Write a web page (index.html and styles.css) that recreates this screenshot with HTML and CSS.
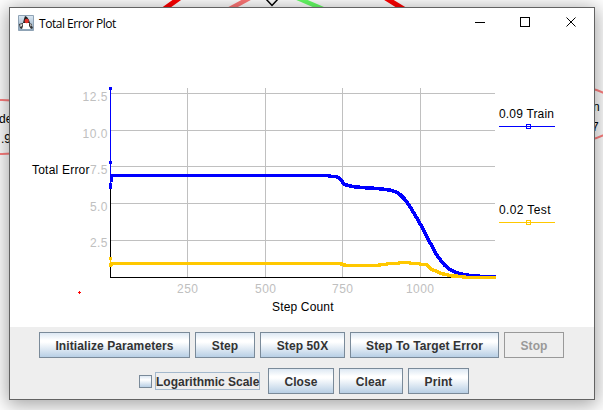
FILE: index.html
```html
<!DOCTYPE html>
<html lang="en">
<head>
<meta charset="utf-8">
<title>Total Error Plot</title>
<link rel="stylesheet" href="styles.css">
</head>
<body>
<svg class="network" width="603" height="410" viewBox="0 0 603 410">
  <g fill="none">
    <path d="M181-3L160 12M376-8L410 13" stroke="#f00" stroke-width="5"/>
    <path d="M259-7L224 12" stroke="#f77" stroke-width="4.5"/>
    <path d="M288-6L330 12" stroke="#6f6" stroke-width="4.5"/>
    <path d="M266-1L272 5.500L278-1" stroke="#000" stroke-width="1.500"/>
    <ellipse cx="2" cy="127" rx="50" ry="27" stroke="#ff8080" stroke-width="2"/>
    <ellipse cx="576" cy="114" rx="44" ry="27" stroke="#ff8080" stroke-width="2"/>
  </g>
  <g class="label">
    <text x="-1" y="123">de</text>
    <text x="1" y="143">.98</text>
    <text x="593" y="111">n</text>
    <text x="592" y="131">7</text>
  </g>
</svg>
<div class="window">
  <header class="titlebar">
    <svg class="app-icon" width="16" height="16" viewBox="0 0 16 16">
      <defs><linearGradient id="tile" x2="0" y2="1"><stop stop-color="#dce9f5"/><stop offset="1" stop-color="#8ca5bb"/></linearGradient></defs>
      <path d="M.5.5h15v15H.5z" fill="url(#tile)" stroke="#8fa3b5"/>
      <path d="M5 8h6l2 6H4z" fill="#fff"/>
      <path d="M7 1l2 1 2 3 1 3H5l1-4z" fill="#222"/>
      <path d="M1 9l4-1 0 3-1 3-2-1zM11 8l3 1 0 2 1 2-2 1-2-3z" fill="#333"/>
      <path d="M2 9.500l2.500-.5-.5 2-1.500 1zM12 9l1.500.5v1.500l-1 .5z" fill="#ddd"/>
      <circle cx="8.700" cy="6" r="2.200" fill="#e2332c"/>
    </svg>
    <h1 class="title">Total Error Plot</h1>
    <svg class="controls" width="104" height="12" viewBox="0 0 104 12" fill="none" stroke="#000">
      <path d="M0 6.500h10M45.500 1.500h9v9h-9z" shape-rendering="crispEdges"/>
      <path d="M91.500 1.500l9 9M100.500 1.500l-9 9"/>
    </svg>
  </header>
  <svg class="plot" width="584" height="289" viewBox="10 38 584 289">
    <path class="grid" d="M187.500 88V277M265.500 88V277M342.500 88V277M420.500 88V277M110 93.500H495M110 130.500H495M110 166.500H495M110 203.500H495M110 240.500H495"/>
    <path class="axis" d="M110.500 88V277.500H495"/>
    <path class="thin train" d="M110.500 88V186"/>
    <path class="mark train" d="M109 87h3v3h-3zM109 161h3v3h-3zM109 183h3v6h-3zM110 177h3v5h-3z"/>
    <path class="curve train" d="M111 175.500H329L330 176.500H336L338 177.500L340 178.500L342 181L344 184.500L349 185.500L352 186.500L362 187.500L377 188.500L386 189.500L392 190.500L396 192L400 194.500L405 199.500L410 206.500L415 215L420 223.500L425 233L430 242.500L435 252L440 259.500L445 265.500L450 269.500L455 272L461 274L470 275.500L482 276.500H496"/>
    <path class="thin test" d="M110.500 259V266"/>
    <path class="mark test" d="M109 257h3v3h-3zM109 263h3v4h-3zM111 263h2v3h-2z"/>
    <path class="curve test" d="M111 263.500H340L343 264.500L346 265.500H378L381 264.500H386L388 263.500H398L400 262.500H409L411 263.500H419L421 264.500H426L432 269.500L437 271.500L441 273.500L446 274.500L452 276L461 276.500L467 277.500H496"/>
    <path class="thin train" d="M499 126.500H555"/>
    <path class="thin train box" d="M526.500 124.500h4v4h-4z"/>
    <path class="thin train" d="M526.500 126.500h4"/>
    <path class="thin test" d="M499 222.500H555"/>
    <path class="thin test box" d="M526.500 220.500h4v4h-4z"/>
    <path class="thin test" d="M526.500 222.500h4"/>
    <path d="M79 291h1v1h1v1h-1v1h-1v-1h-1v-1h1z" fill="#f00" shape-rendering="crispEdges"/>
    <g class="tick">
      <text x="82.500" y="101" textLength="25">12.5</text>
      <text x="82.500" y="138" textLength="25">10.0</text>
      <text x="90" y="174" textLength="17.500">7.5</text>
      <text x="90" y="211" textLength="17.500">5.0</text>
      <text x="90" y="247" textLength="17.500">2.5</text>
      <text x="177" y="293" textLength="21">250</text>
      <text x="255" y="293" textLength="21">500</text>
      <text x="332" y="293" textLength="21">750</text>
      <text x="406" y="293" textLength="28">1000</text>
    </g>
    <g class="label">
      <text x="32" y="174" textLength="57.500">Total Error</text>
      <text x="272" y="311" textLength="61.500">Step Count</text>
      <text x="499" y="118" textLength="55">0.09 Train</text>
      <text x="499" y="214" textLength="51.500">0.02 Test</text>
    </g>
  </svg>
  <div class="panel">
    <div class="row">
      <button class="btn init">Initialize Parameters</button>
      <button class="btn step">Step</button>
      <button class="btn step50">Step 50X</button>
      <button class="btn target">Step To Target Error</button>
      <button class="btn stop" disabled>Stop</button>
    </div>
    <div class="row second">
      <label class="check"><span class="tick-box"></span><span class="focus">Logarithmic Scale</span></label>
      <button class="btn close">Close</button>
      <button class="btn clear">Clear</button>
      <button class="btn print">Print</button>
    </div>
  </div>
</div>
</body>
</html>
```
FILE: styles.css
```css
* { box-sizing: border-box; }
body {
  margin: 0;
  width: 603px;
  height: 410px;
  overflow: hidden;
  padding: 7px 8px 10px 9px;
  background: #fff;
  font-family: "Liberation Sans", Arial, sans-serif;
}
.network { position: absolute; left: 0; top: 0; }
.window {
  position: relative;
  width: 586px;
  height: 393px;
  border: 1px solid #626262;
  background: #fff;
  box-shadow: 0 3px 18px 2px rgba(0, 0, 0, .36);
  display: flex;
  flex-direction: column;
}
.titlebar {
  height: 30px;
  display: flex;
  align-items: center;
  padding: 0 15px 0 8px;
}
.title {
  margin: 0 auto 0 5px;
  font: 400 12px "Open Sans", "Noto Sans", sans-serif;
  letter-spacing: -.47px;
  color: #000;
}
.app-icon { margin-top: -1px; }
.controls { margin-top: -2px; }
.plot { display: block; flex: none; }
.grid, .axis, .thin, .curve { fill: none; shape-rendering: crispEdges; }
.grid { stroke: silver; }
.axis { stroke: #000; }
.train { stroke: #00f; }
.test { stroke: #ffc800; }
.curve { stroke-width: 3.6px; stroke-linejoin: round; }
.mark { stroke: none; shape-rendering: crispEdges; }
.mark.train { fill: #00f; }
.mark.test { fill: #ffc800; }
.thin.box { fill: #fff; }
.tick, .label { font: 12px "Liberation Sans", Arial, sans-serif; fill: #000; }
.tick { fill: silver; }
.panel { flex: 1; background: #eee; padding-top: 5px; }
.row { display: flex; gap: 5px; padding-left: 29px; }
.second { margin-top: 10px; padding-left: 129px; }
.btn {
  height: 26px;
  padding: 2px 0 0;
  border: 1px solid #7a8a99;
  border-radius: 0;
  background: linear-gradient(#dde8f3 0%, #fff 30%, #fff 38%, #b8cfe5 100%);
  font: bold 12px "Liberation Sans", Arial, sans-serif;
  letter-spacing: .1px;
  color: #333;
  white-space: nowrap;
}
.btn:disabled { background: #eee; border-color: #999; color: #999; }
.init { width: 151px; }
.step, .stop { width: 60px; }
.step50 { width: 85px; }
.target { width: 149px; }
.close { width: 66px; }
.clear { width: 64px; }
.print { width: 61px; }
.check { display: flex; align-items: center; gap: 3px; margin-right: 3px; }
.tick-box {
  width: 13px;
  height: 13px;
  border: 1px solid #7a8a99;
  background: linear-gradient(#dde8f3, #fff 35%, #b8cfe5);
}
.focus {
  width: 105px;
  height: 18px;
  border: 1px solid #a3b8cc;
  font: bold 12px/18px "Liberation Sans", Arial, sans-serif;
  color: #333;
  text-align: center;
  white-space: nowrap;
}
```
